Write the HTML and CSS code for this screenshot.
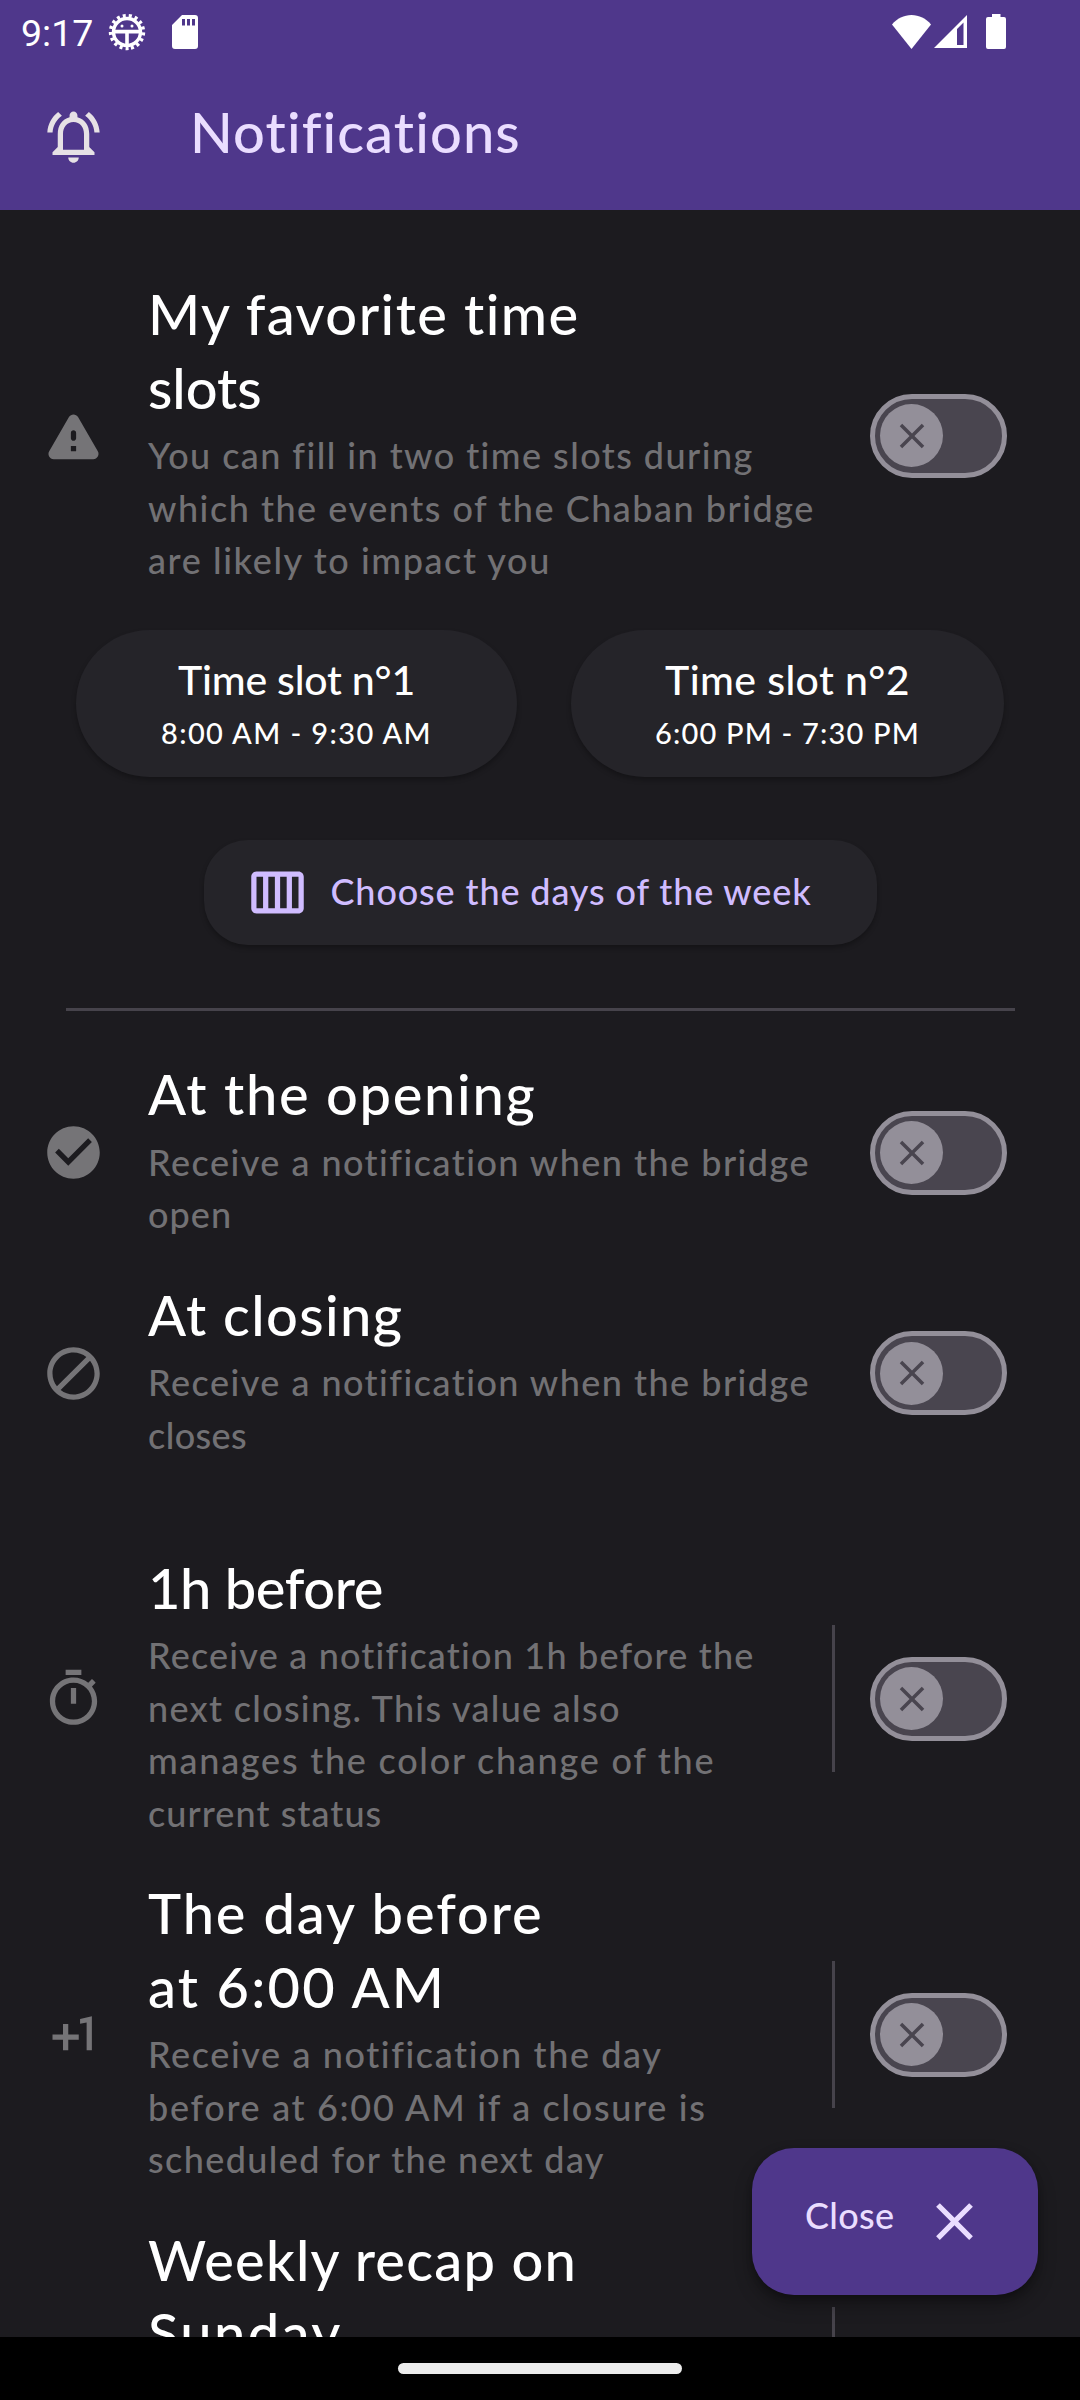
FILE: index.html
```html
<!DOCTYPE html>
<html lang="en">
<head>
<meta charset="utf-8">
<title>Notifications</title>
<link rel="stylesheet" href="styles.css">
</head>
<body>
<svg class="defs" width="0" height="0" aria-hidden="true">
  <symbol id="close" viewBox="0 0 24 24"><path d="M19 6.41 17.59 5 12 10.59 6.41 5 5 6.41 10.59 12 5 17.59 6.41 19 12 13.41 17.59 19 19 17.59 13.41 12z"/></symbol>
</svg>
<div class="screen">
  <header class="header">
    <div class="status-bar">
      <span class="clock">9:17</span>
      <svg class="status-bug" viewBox="0 0 38 38">
        <circle cx="19" cy="19" r="13.5" fill="none" stroke="#fff" stroke-width="3.4"/>
        <circle cx="19" cy="19" r="16.4" fill="none" stroke="#fff" stroke-width="3.6" stroke-dasharray="3.03 3.03" transform="rotate(84.5 19 19)"/>
        <path d="M6 16.8h26v3.6H20.8V32h-3.6V20.4H6z" fill="#fff"/>
        <circle cx="14" cy="13" r="1.5" fill="#fff"/><circle cx="24" cy="13" r="1.5" fill="#fff"/>
      </svg>
      <svg class="status-sd" viewBox="0 0 26 34"><path fill="#fff" fill-rule="evenodd" d="M10 0h13a3 3 0 0 1 3 3v28a3 3 0 0 1-3 3H3a3 3 0 0 1-3-3V10zM10 4v6.5h3V4zM15 4v6.5h3V4zM20 4v6.5h3V4z"/></svg>
      <div class="status-right">
        <svg class="status-wifi" viewBox="0 0 39 34"><path fill="#fff" d="M0 9.5C5 3.500 12 0 19.500 0S34 3.500 39 9.500L19.500 34z"/></svg>
        <svg class="status-cell" viewBox="0 0 33 33"><path fill="#fff" fill-rule="evenodd" d="M33 0v33H0zM23 14v16h6.500V7.500z"/></svg>
        <svg class="status-battery" viewBox="0 0 20 35"><path fill="#fff" d="M6 0h8.500v3H18a2 2 0 0 1 2 2v28a2 2 0 0 1-2 2H2a2 2 0 0 1-2-2V5a2 2 0 0 1 2-2h4z"/></svg>
      </div>
    </div>
    <div class="app-bar">
      <svg class="icon icon-bell" viewBox="0 0 24 24"><path d="M12 22c1.1 0 2-.9 2-2h-4c0 1.100.9 2 2 2zm6-6v-5c0-3.070-1.630-5.640-4.500-6.320V4c0-.83-.67-1.500-1.500-1.500s-1.500.67-1.500 1.500v.68C7.640 5.360 6 7.920 6 11v5l-2 2v1h16v-1l-2-2zm-2 1H8v-6c0-2.480 1.510-4.500 4-4.500s4 2.020 4 4.500v6zM7.580 4.080 6.150 2.650C3.750 4.480 2.170 7.300 2.030 10.500h2c.15-2.650 1.510-4.970 3.550-6.420zm12.390 6.420h2c-.15-3.200-1.730-6.020-4.120-7.850l-1.420 1.430c2.020 1.450 3.390 3.770 3.540 6.420z"/></svg>
      <h1 class="app-title">Notifications</h1>
    </div>
  </header>

  <main class="content">
    <section class="row">
      <svg class="icon" viewBox="0 0 24 24"><path d="M4.470 21h15.060c1.540 0 2.500-1.670 1.730-3L13.730 4.990c-.77-1.330-2.690-1.330-3.460 0L2.740 18c-.77 1.330.19 3 1.730 3zM12 14c-.55 0-1-.45-1-1v-2c0-.55.45-1 1-1s1 .45 1 1v2c0 .55-.45 1-1 1zm1 4h-2v-2h2v2z"/></svg>
      <div class="text">
        <h2 class="title"><span class="tr-145">My favorite time</span><span class="tr-0">slots</span></h2>
        <p class="desc"><span class="tr-144">You can fill in two time slots during</span><span class="tr-152">which the events of the Chaban bridge</span><span class="tr-160">are likely to impact you</span></p>
      </div>
      <div class="switch"><div class="thumb"><svg viewBox="0 0 24 24"><use href="#close"/></svg></div></div>
    </section>

    <div class="slots">
      <div class="slot slot-first"><div class="slot-name tr-n02">Time slot n°1</div><div class="slot-time tr-140">8:00 AM - 9:30 AM</div></div>
      <div class="slot slot-second"><div class="slot-name tr-040">Time slot n°2</div><div class="slot-time tr-120">6:00 PM - 7:30 PM</div></div>
    </div>

    <div class="days-button">
      <svg class="icon-week" viewBox="0 0 24 24"><path d="M20 4H4c-1.100 0-2 .9-2 2v12c0 1.100.9 2 2 2h16c1.100 0 2-.9 2-2V6c0-1.100-.9-2-2-2zm-7 2h2.500v12H13V6zm-2 12H8.500V6H11v12zM4 6h2.500v12H4V6zm16 12h-2.500V6H20v12z"/></svg>
      <span class="tr-087">Choose the days of the week</span>
    </div>

    <hr class="divider">

    <section class="row">
      <svg class="icon" viewBox="0 0 24 24"><path d="M12 2C6.480 2 2 6.480 2 12s4.480 10 10 10 10-4.480 10-10S17.520 2 12 2zm-2 15-5-5 1.410-1.410L10 14.170l7.590-7.590L19 8l-9 9z"/></svg>
      <div class="text">
        <h2 class="title"><span class="tr-168">At the opening</span></h2>
        <p class="desc"><span class="tr-147">Receive a notification when the bridge</span><span class="tr-107">open</span></p>
      </div>
      <div class="switch"><div class="thumb"><svg viewBox="0 0 24 24"><use href="#close"/></svg></div></div>
    </section>

    <section class="row row-last">
      <svg class="icon" viewBox="0 0 24 24"><path d="M12 2C6.500 2 2 6.500 2 12s4.500 10 10 10 10-4.500 10-10S17.500 2 12 2zM4 12c0-4.400 3.600-8 8-8 1.800 0 3.500.6 4.900 1.700L5.700 16.900C4.600 15.500 4 13.800 4 12zm8 8c-1.800 0-3.500-.6-4.900-1.700L18.300 7.100C19.400 8.500 20 10.200 20 12c0 4.400-3.600 8-8 8z"/></svg>
      <div class="text">
        <h2 class="title"><span class="tr-140">At closing</span></h2>
        <p class="desc"><span class="tr-147">Receive a notification when the bridge</span><span class="tr-040">closes</span></p>
      </div>
      <div class="switch"><div class="thumb"><svg viewBox="0 0 24 24"><use href="#close"/></svg></div></div>
    </section>

    <section class="row row-split">
      <svg class="icon" viewBox="0 0 24 24"><path d="M9 1h6v2H9zM11 8h2v6h-2zM19.030 7.390l1.420-1.420c-.43-.51-.9-.99-1.410-1.410l-1.420 1.420C16.070 4.740 14.120 4 12 4c-4.970 0-9 4.030-9 9s4.020 9 9 9 9-4.030 9-9c0-2.120-.74-4.070-1.970-5.610zM12 20c-3.870 0-7-3.130-7-7s3.130-7 7-7 7 3.130 7 7-3.130 7-7 7z"/></svg>
      <div class="text">
        <h2 class="title"><span class="tr-n04">1h before</span></h2>
        <p class="desc"><span class="tr-120">Receive a notification 1h before the</span><span class="tr-130">next closing. This value also</span><span class="tr-175">manages the color change of the</span><span class="tr-107">current status</span></p>
      </div>
      <div class="rule"></div>
      <div class="switch"><div class="thumb"><svg viewBox="0 0 24 24"><use href="#close"/></svg></div></div>
    </section>

    <section class="row row-split">
      <svg class="icon" viewBox="0 0 24 24"><path d="M10 8H8v4H4v2h4v4h2v-4h4v-2h-4zM14.500 6.080V7.900l2.500-.5V18h2V5z"/></svg>
      <div class="text">
        <h2 class="title"><span class="tr-190">The day before</span><span class="tr-220">at 6:00 AM</span></h2>
        <p class="desc"><span class="tr-160">Receive a notification the day</span><span class="tr-168">before at 6:00 AM if a closure is</span><span class="tr-140">scheduled for the next day</span></p>
      </div>
      <div class="rule"></div>
      <div class="switch"><div class="thumb"><svg viewBox="0 0 24 24"><use href="#close"/></svg></div></div>
    </section>

    <section class="row row-split row-cut">
      <div class="text">
        <h2 class="title"><span class="tr-120">Weekly recap on</span><span class="tr-240">Sunday</span></h2>
      </div>
      <div class="rule"></div>
    </section>
  </main>

  <footer class="nav-bar"><div class="nav-handle"></div></footer>

  <div class="fab"><span class="fab-label">Close</span><svg viewBox="0 0 24 24"><use href="#close"/></svg></div>
</div>
</body>
</html>
```
FILE: styles.css
```css
* { box-sizing: border-box; }

body {
  margin: 0;
  background: #1c1b1f;
  color: #fff;
  font-family: Lato, sans-serif;
  font-weight: 500;
}

h1, h2, p { margin: 0; font-weight: 500; }
svg { display: block; flex: none; }
.defs { position: absolute; }

.screen {
  position: relative;
  display: flex;
  flex-direction: column;
  width: 1080px;
  height: 2400px;
  overflow: hidden;
}

/* Header */
.header {
  flex: none;
  height: 210px;
  background: #4f378b;
}

.status-bar {
  display: flex;
  align-items: center;
  height: 63px;
  padding: 0 74px 0 21px;
}

.clock {
  width: 87px;
  padding-top: 2px;
  font: 400 37.5px/44px Roboto, sans-serif;
}

.status-bug { width: 38px; height: 38px; }
.status-sd { width: 26px; height: 34px; margin-left: 26px; }

.status-right {
  display: flex;
  align-items: center;
  margin-left: auto;
}

.status-wifi { width: 39px; height: 34px; margin-right: 3px; }
.status-cell { width: 33px; height: 33px; margin-right: 19px; }
.status-battery { width: 20px; height: 35px; }

.app-bar {
  display: flex;
  align-items: center;
  height: 147px;
  padding: 0 42px;
}

.icon {
  width: 63px;
  height: 63px;
  fill: #757477;
}

.icon-bell { fill: #e6e1e5; }

.app-title {
  margin-left: 85px;
  padding-bottom: 9px;
  color: #eaddff;
  font-size: 56px;
  line-height: 74px;
  letter-spacing: 1.1px;
}

/* Settings list */
.content {
  flex: 1;
  min-height: 0;
  padding-top: 64px;
  overflow: hidden;
}

.row {
  display: grid;
  grid-template-columns: 63px 722px 137px;
  column-gap: 43px;
  align-items: center;
  margin-bottom: 23.5px;
  padding-left: 42px;
}

.row:not(.row-split) { column-gap: 0; grid-template-columns: 106px 722px 137px; }
.row:first-child { margin-bottom: 33px; }
.row-last { margin-bottom: 76px; }

/* Rows with a separator before the switch */
.row-split {
  grid-template-columns: 106px 684px 38px 137px;
  column-gap: 0;
}

.row-cut { height: 321px; align-items: start; }
.row-cut .text { grid-column: 2; }
.row-cut .rule { align-self: center; }

.text { padding: 3px 0 10.5px; }

.title {
  font-size: 56px;
  line-height: 73.5px;
}

.desc {
  margin-top: 5px;
  color: #727174;
  font-size: 36px;
  line-height: 52.5px;
}

.title span, .desc span {
  display: block;
  white-space: nowrap;
}

.rule {
  width: 3px;
  height: 147px;
  background: #46434b;
}

.switch {
  display: flex;
  align-items: center;
  width: 137px;
  height: 84px;
  padding-left: 5.25px;
  border: 5.25px solid #938f99;
  border-radius: 42px;
  background: #49454f;
}

.thumb {
  display: flex;
  align-items: center;
  justify-content: center;
  width: 63px;
  height: 63px;
  border-radius: 50%;
  background: #938f99;
}

.thumb svg { width: 42px; height: 42px; fill: #49454f; }

/* Time slots */
.slots {
  display: flex;
  justify-content: space-between;
  padding: 0 76px;
}

.slot {
  height: 147px;
  padding-top: 25px;
  border-radius: 74px;
  background: #252429;
  box-shadow: 0 3px 5px rgba(0, 0, 0, .28);
  text-align: center;
  white-space: nowrap;
}

.slot-first { width: 441px; }
.slot-second { width: 433px; }
.slot-name { font-size: 41px; line-height: 50px; }
.slot-time { font-size: 29px; line-height: 36px; margin-top: 10px; }

.days-button {
  display: flex;
  align-items: center;
  width: 673px;
  height: 105px;
  margin: 63px auto 0;
  padding-left: 42px;
  border-radius: 44px;
  background: #252429;
  box-shadow: 0 3px 5px rgba(0, 0, 0, .28);
  color: #d0bcff;
  font-size: 36px;
  line-height: 46px;
  white-space: nowrap;
}

.days-button span { padding-bottom: 4px; }
.icon-week { width: 63px; height: 63px; margin-right: 22px; fill: #d0bcff; }

.divider {
  height: 3px;
  margin: 63px 65.5px 43px;
  border: 0;
  background: #46434b;
}

/* Floating button over the list */
.fab {
  position: absolute;
  top: 2148px;
  left: 752px;
  display: flex;
  align-items: center;
  width: 286px;
  height: 147px;
  padding-left: 53px;
  border-radius: 42px;
  background: #4f378b;
  box-shadow: 0 10px 18px rgba(0, 0, 0, .3), 0 3px 6px rgba(0, 0, 0, .2);
  color: #eaddff;
}

.fab-label {
  width: 118px;
  padding-bottom: 13px;
  font-size: 36px;
  line-height: 46px;
  letter-spacing: .32px;
}

.fab svg { width: 63px; height: 63px; fill: #eaddff; }

/* System navigation */
.nav-bar {
  display: flex;
  flex: none;
  justify-content: center;
  height: 63px;
  padding-top: 26px;
  background: #000;
}

.nav-handle {
  width: 284px;
  height: 11px;
  border-radius: 6px;
  background: #ececec;
}

/* Tracking steps */
.tr-n04 { letter-spacing: -.4px; }
.tr-n02 { letter-spacing: -.2px; }
.tr-0 { letter-spacing: 0; }
.tr-040 { letter-spacing: .4px; }
.tr-087 { letter-spacing: .87px; }
.tr-107 { letter-spacing: 1.07px; }
.tr-120 { letter-spacing: 1.2px; }
.tr-130 { letter-spacing: 1.3px; }
.tr-140 { letter-spacing: 1.4px; }
.tr-144 { letter-spacing: 1.44px; }
.tr-145 { letter-spacing: 1.45px; }
.tr-147 { letter-spacing: 1.47px; }
.tr-152 { letter-spacing: 1.52px; }
.tr-160 { letter-spacing: 1.6px; }
.tr-168 { letter-spacing: 1.68px; }
.tr-175 { letter-spacing: 1.75px; }
.tr-190 { letter-spacing: 1.9px; }
.tr-220 { letter-spacing: 2.2px; }
.tr-240 { letter-spacing: 2.4px; }
```
